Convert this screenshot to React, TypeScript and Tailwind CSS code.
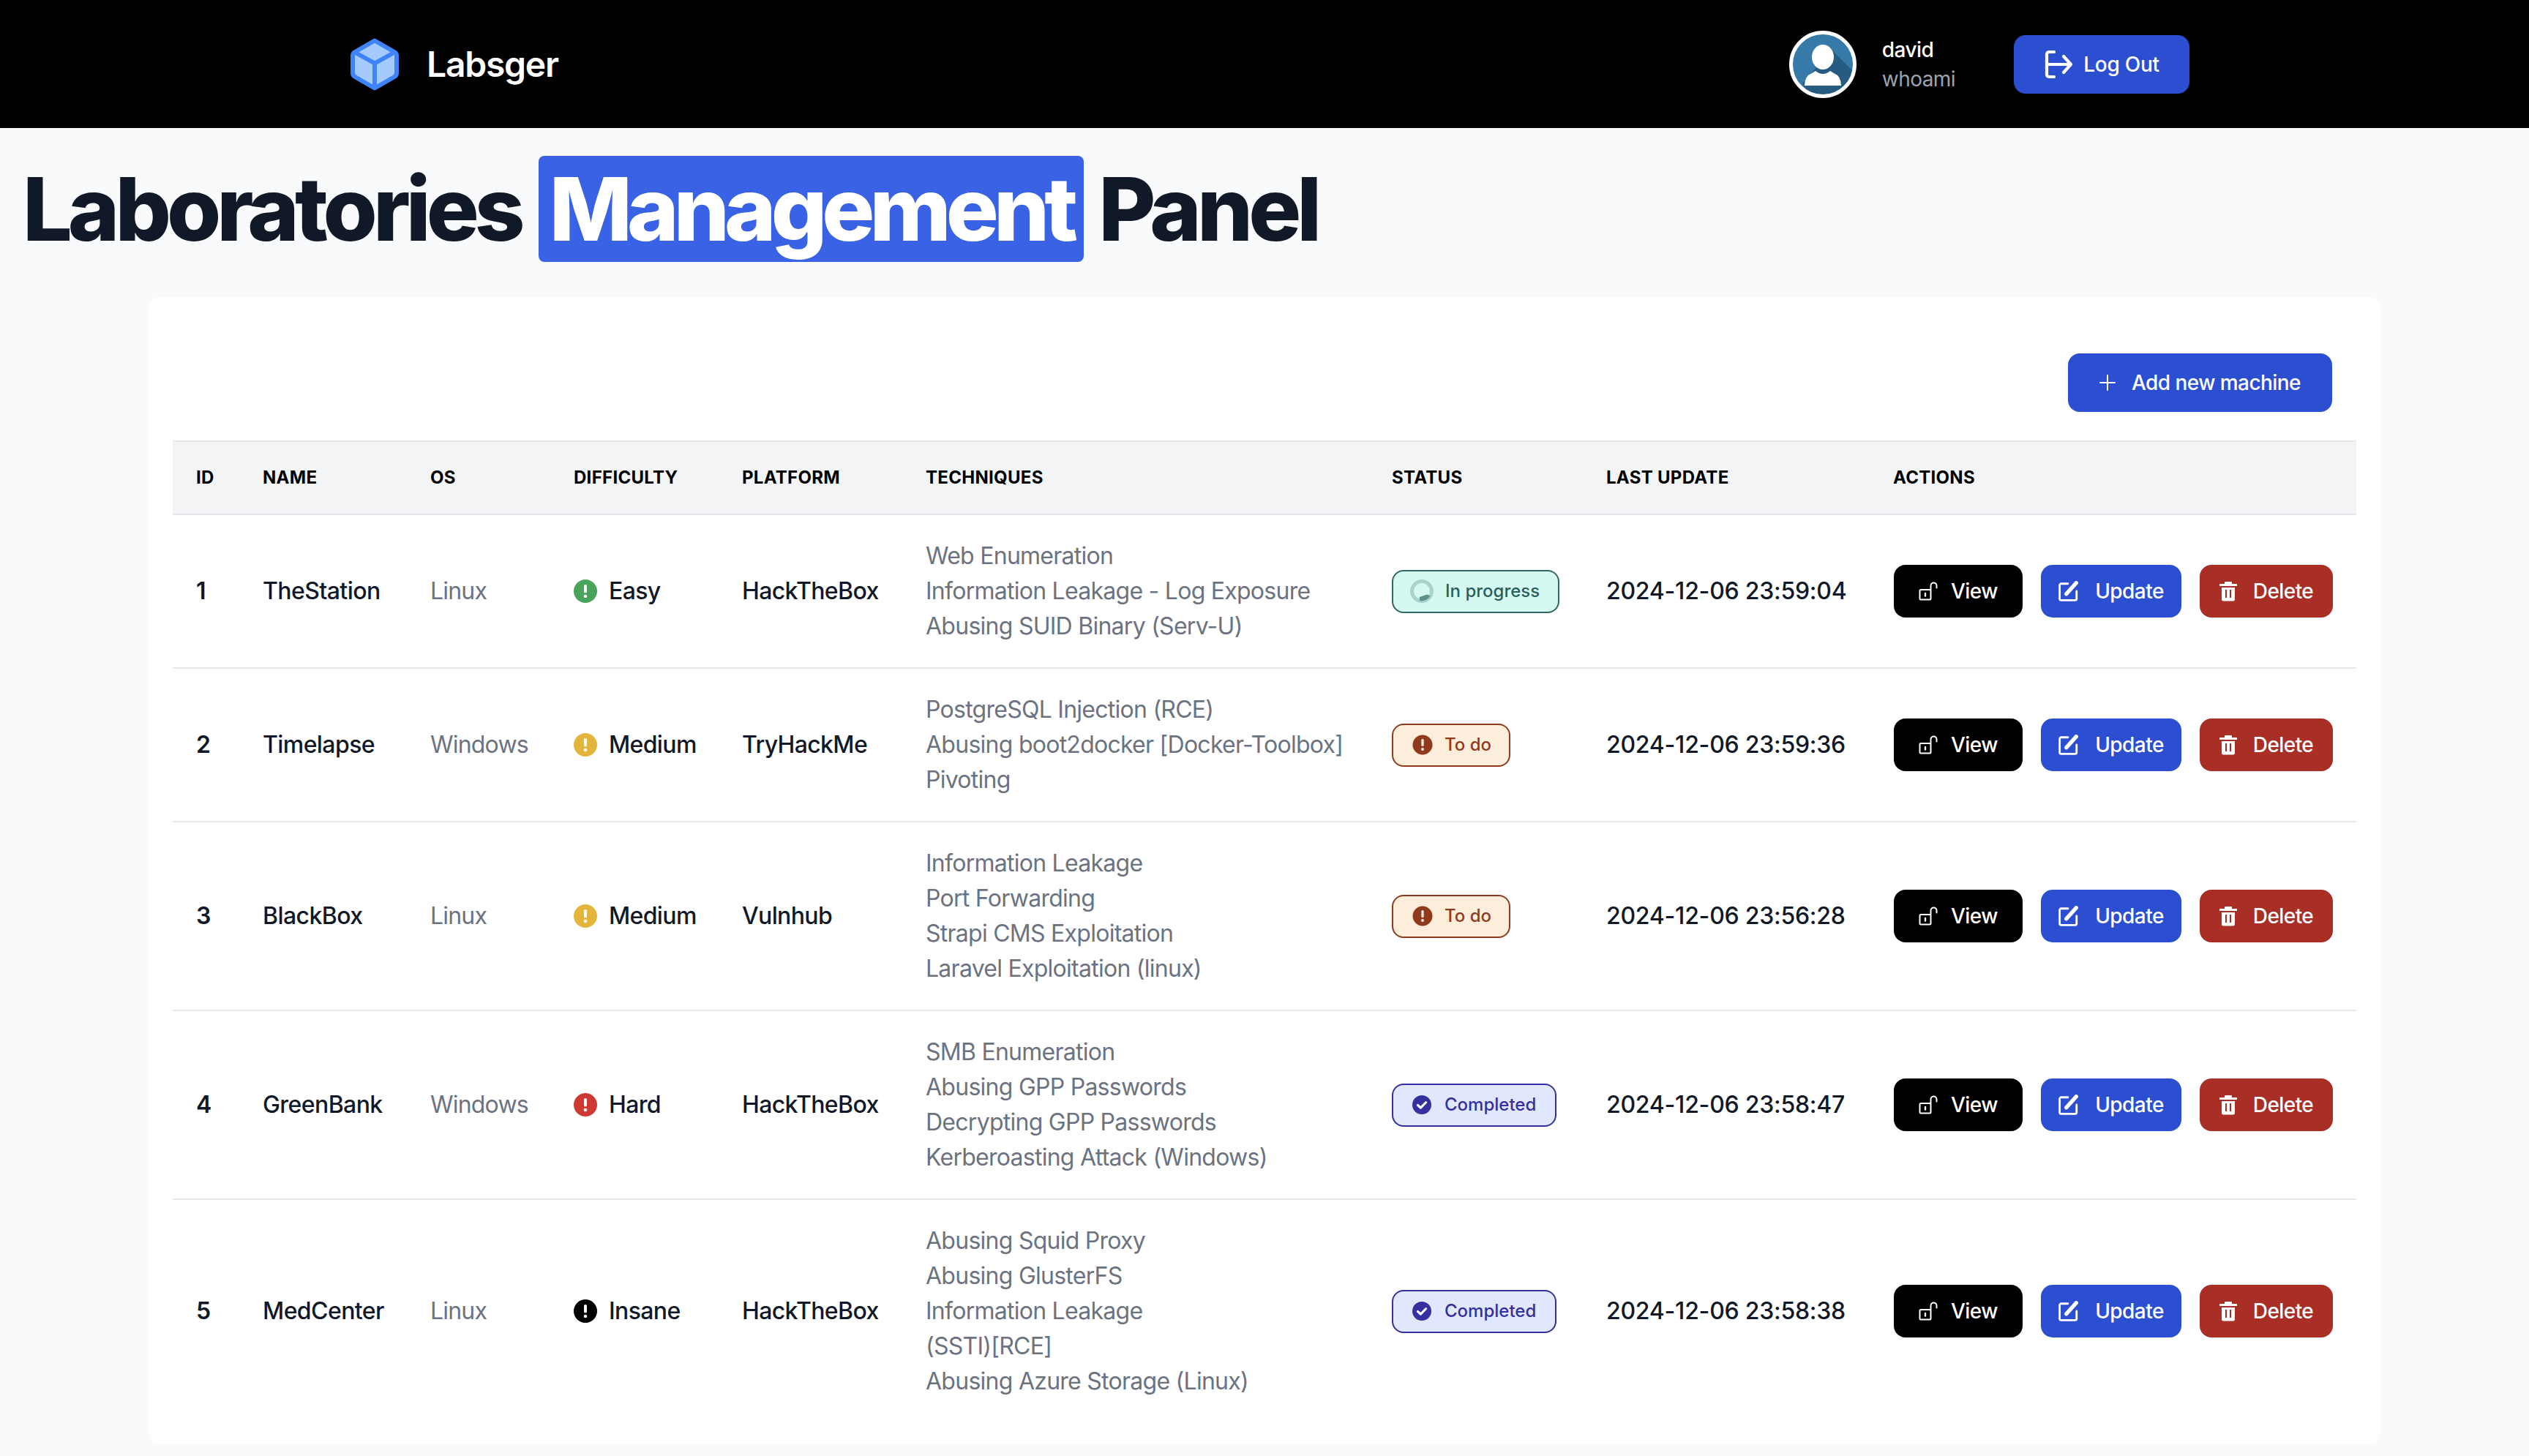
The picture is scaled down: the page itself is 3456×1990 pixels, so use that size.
import React from 'react';

type Status = 'progress' | 'todo' | 'done';

interface Machine {
  id: number;
  name: string;
  os: string;
  difficulty: string;
  platform: string;
  techniques: string[];
  status: Status;
  updated: string;
}

const machines: Machine[] = [
  {
    id: 1,
    name: 'TheStation',
    os: 'Linux',
    difficulty: 'Easy',
    platform: 'HackTheBox',
    techniques: ['Web Enumeration', 'Information Leakage - Log Exposure', 'Abusing SUID Binary (Serv-U)'],
    status: 'progress',
    updated: '2024-12-06 23:59:04',
  },
  {
    id: 2,
    name: 'Timelapse',
    os: 'Windows',
    difficulty: 'Medium',
    platform: 'TryHackMe',
    techniques: ['PostgreSQL Injection (RCE)', 'Abusing boot2docker [Docker-Toolbox]', 'Pivoting'],
    status: 'todo',
    updated: '2024-12-06 23:59:36',
  },
  {
    id: 3,
    name: 'BlackBox',
    os: 'Linux',
    difficulty: 'Medium',
    platform: 'Vulnhub',
    techniques: ['Information Leakage', 'Port Forwarding', 'Strapi CMS Exploitation', 'Laravel Exploitation (linux)'],
    status: 'todo',
    updated: '2024-12-06 23:56:28',
  },
  {
    id: 4,
    name: 'GreenBank',
    os: 'Windows',
    difficulty: 'Hard',
    platform: 'HackTheBox',
    techniques: ['SMB Enumeration', 'Abusing GPP Passwords', 'Decrypting GPP Passwords', 'Kerberoasting Attack (Windows)'],
    status: 'done',
    updated: '2024-12-06 23:58:47',
  },
  {
    id: 5,
    name: 'MedCenter',
    os: 'Linux',
    difficulty: 'Insane',
    platform: 'HackTheBox',
    techniques: ['Abusing Squid Proxy', 'Abusing GlusterFS', 'Information Leakage', '(SSTI)[RCE]', 'Abusing Azure Storage (Linux)'],
    status: 'done',
    updated: '2024-12-06 23:58:38',
  },
];

const difficultyColor: Record<string, string> = {
  Easy: 'text-[#4aa35a]',
  Medium: 'text-[#e3b53d]',
  Hard: 'text-[#cc3a32]',
  Insane: 'text-black',
};

function CubeLogo() {
  return (
    <svg viewBox="0 0 66 72" className="h-[72px] w-[66px]">
      <path
        d="M33 3.5 L60 19 Q63 21 63 24 L63 48 Q63 51 60 53 L33 68.5 L6 53 Q3 51 3 48 L3 24 Q3 21 6 19 Z"
        fill="#a4cafe"
        stroke="#3f83f8"
        strokeWidth="6"
        strokeLinejoin="round"
      />
      <path d="M5 19 L33 34.5 L61 19 M33 34.5 L33 68" fill="none" stroke="#3f83f8" strokeWidth="6" />
    </svg>
  );
}

function Avatar() {
  return (
    <svg viewBox="0 0 92 92" className="h-[92px] w-[92px]">
      <clipPath id="avatar-clip">
        <circle cx="46" cy="46" r="43" />
      </clipPath>
      <circle cx="46" cy="46" r="43" fill="#367aaa" />
      <g clipPath="url(#avatar-clip)">
        <path d="M58 26 L92 60 L92 92 L30 92 L18 72 Z" fill="#275c82" />
        <ellipse cx="46" cy="36" rx="15" ry="17" fill="#fff" />
        <path d="M21 75 Q21 62 31 58 L36 55 Q46 63 56 55 L61 58 Q71 62 71 75 Z" fill="#fff" />
      </g>
      <circle cx="46" cy="46" r="43.5" fill="none" stroke="#fff" strokeWidth="5" />
    </svg>
  );
}

function LogoutIcon() {
  return (
    <svg viewBox="0 0 40 40" fill="none" stroke="currentColor" strokeWidth="4.2" strokeLinecap="round" strokeLinejoin="round" className="h-10 w-10">
      <path d="M14 3H7a3 3 0 0 0-3 3v28a3 3 0 0 0 3 3h7" />
      <path d="M6 20h31M27 9l10 11-10 11" />
    </svg>
  );
}

function PlusIcon() {
  return (
    <svg viewBox="0 0 22 22" fill="none" stroke="currentColor" strokeWidth="2" strokeLinecap="round" className="h-[22px] w-[22px]">
      <path d="M11 1v20M1 11h20" />
    </svg>
  );
}

function LockOpenIcon() {
  return (
    <svg viewBox="0 0 26 26" fill="none" stroke="currentColor" strokeWidth="2" strokeLinecap="round" strokeLinejoin="round" className="h-[26px] w-[26px]">
      <rect x="1.5" y="11" width="15" height="13.5" rx="1.5" />
      <path d="M9 16v3.5" strokeWidth="2.4" />
      <path d="M16.5 11V5.5a4 4 0 0 1 8 0v3" />
    </svg>
  );
}

function EditIcon() {
  return (
    <svg viewBox="0 0 26 26" fill="none" stroke="currentColor" className="h-7 w-7" strokeLinecap="round" strokeLinejoin="round">
      <path d="M12 3.5H3.5a2 2 0 0 0-2 2v17a2 2 0 0 0 2 2H21a2 2 0 0 0 2-2V13" strokeWidth="2.6" />
      <path d="M10 16.5 L22.5 2.5" strokeWidth="5" />
    </svg>
  );
}

function TrashIcon() {
  return (
    <svg viewBox="0 0 24 28" className="h-7 w-6" fill="currentColor">
      <path d="M8 1h8a1 1 0 0 1 1 1v2h6a1 1 0 0 1 0 3H1a1 1 0 0 1 0-3h6V2a1 1 0 0 1 1-1z" />
      <path
        fillRule="evenodd"
        d="M3 9h18v16a2.5 2.5 0 0 1-2.500 2.500h-13A2.500 2.500 0 0 1 3 25zM8 12v11h2V12zM14 12v11h2V12z"
      />
    </svg>
  );
}

function AlertDot({ className }: { className: string }) {
  return (
    <svg viewBox="0 0 32 32" className={className}>
      <circle cx="16" cy="16" r="16" fill="currentColor" />
      <rect x="14" y="7" width="4" height="11.500" rx="2" fill="#fff" />
      <circle cx="16" cy="23" r="2.300" fill="#fff" />
    </svg>
  );
}

function StatusBadge({ status }: { status: Status }) {
  if (status === 'progress') {
    return (
      <span className="flex h-[59px] w-[229px] items-center gap-4 rounded-2xl border-2 border-[#2f6663] bg-[#d5f9f1] pl-[23px] text-2xl font-medium text-[#2c5f5c]">
        <svg viewBox="0 0 32 32" className="h-8 w-8 shrink-0">
          <circle cx="16" cy="16" r="13.500" fill="none" stroke="#a9d2cc" strokeWidth="5" />
          <path d="M13 29 L13 24 L23 20.500 L27.500 22.500 A13.500 13.500 0 0 1 13 29z" fill="#5f918b" />
        </svg>
        In progress
      </span>
    );
  }
  if (status === 'todo') {
    return (
      <span className="flex h-[59px] w-[162px] items-center gap-4 rounded-2xl border-2 border-[#8f3a1c] bg-[#fdeddb] pl-[26px] text-2xl font-medium text-[#8f3a1c]">
        <svg viewBox="0 0 28 28" className="h-7 w-7 shrink-0">
          <circle cx="14" cy="14" r="13.500" fill="#8f3a1c" />
          <rect x="12.300" y="6" width="3.400" height="10" rx="1.500" fill="#fdeddb" />
          <circle cx="14" cy="20" r="2" fill="#fdeddb" />
        </svg>
        To do
      </span>
    );
  }
  return (
    <span className="flex h-[59px] w-[225px] items-center gap-[18px] rounded-2xl border-2 border-[#352fa0] bg-[#e1e7fc] pl-[26px] text-2xl font-medium text-[#352fa0]">
      <svg viewBox="0 0 28 28" className="h-[26px] w-[26px] shrink-0">
        <circle cx="14" cy="14" r="14" fill="#352fa0" />
        <path d="M8 14.500l4.200 4L20 10.500" fill="none" stroke="#fff" strokeWidth="3.400" strokeLinecap="round" strokeLinejoin="round" />
      </svg>
      Completed
    </span>
  );
}

const headers = ['ID', 'Name', 'OS', 'Difficulty', 'Platform', 'Techniques', 'Status', 'Last update', 'Actions'];

export default function App() {
  return (
    <div className="min-h-[1990px] bg-[#f9fafb] font-[family-name:Inter,sans-serif] text-[#111827]">
      {/* Top bar */}
      <header className="flex h-[175px] items-center justify-between bg-black pl-[479px] pr-[464px]">
        <div className="flex items-center gap-[38px]">
          <CubeLogo />
          <span className="text-5xl font-semibold tracking-[-0.026em] text-white">Labsger</span>
        </div>
        <div className="flex items-center">
          <Avatar />
          <div className="ml-[35px] mr-[80px] flex flex-col text-[28px] leading-10 tracking-[-0.02em]">
            <span className="font-medium text-white">david</span>
            <span className="text-[#9ca3af]">whoami</span>
          </div>
          <button className="flex h-20 w-[240px] items-center justify-center gap-[14px] rounded-2xl bg-[#2c4fd1] text-[28px] font-medium tracking-[-0.01em] text-white">
            <LogoutIcon />
            Log Out
          </button>
        </div>
      </header>

      <h1 className="mb-[60px] whitespace-nowrap pl-[31px] pt-[51px] text-[120px] font-extrabold leading-[120px] tracking-[-0.05em]">
        Laboratories{' '}
        <span className="ml-1 rounded-lg bg-[#3963e4] px-[15px] tracking-[-0.058em] text-white">Management</span> Panel
      </h1>

      {/* Machines card */}
      <main className="mx-[203px] rounded-2xl bg-white px-[33px] pb-[30px] pt-[77px]">
        <div className="mb-[39px] flex justify-end pr-[33px]">
          <button className="flex h-20 w-[361px] items-center justify-center gap-[22px] rounded-2xl bg-[#2c4fd1] text-[28px] font-medium tracking-[-0.02em] text-white">
            <PlusIcon />
            Add new machine
          </button>
        </div>

        <table className="w-full table-fixed border-collapse text-left text-[32px] leading-[48px]">
          <colgroup>
            <col className="w-[91px]" />
            <col className="w-[229px]" />
            <col className="w-[196px]" />
            <col className="w-[230px]" />
            <col className="w-[251px]" />
            <col className="w-[637px]" />
            <col className="w-[293px]" />
            <col className="w-[392px]" />
            <col />
          </colgroup>
          <thead className="bg-[#f3f4f6]">
            <tr className="h-[100px] border-y-2 border-[#e5e7eb] text-2xl font-bold uppercase tracking-[0.012em] text-black">
              {headers.map(h => (
                <th key={h} className="pl-8 font-bold">
                  {h}
                </th>
              ))}
            </tr>
          </thead>
          <tbody>
            {machines.map((m, index) => (
              <tr key={m.id} className={index < machines.length - 1 ? 'border-b-2 border-[#e5e7eb]' : ''}>
                <td className="py-8 pl-8 font-semibold">{m.id}</td>
                <td className="py-8 pl-8 font-medium tracking-[-0.018em]">{m.name}</td>
                <td className="py-8 pl-8 tracking-[-0.025em] text-[#6b7280]">{m.os}</td>
                <td className="py-8 pl-8 font-medium tracking-[-0.02em]">
                  <span className="flex items-center gap-4">
                    <AlertDot className={`h-8 w-8 shrink-0 ${difficultyColor[m.difficulty]}`} />
                    {m.difficulty}
                  </span>
                </td>
                <td className="py-8 pl-8 font-medium tracking-[-0.02em]">{m.platform}</td>
                <td className="py-8 pl-8 tracking-[-0.023em] text-[#6b7280]">
                  {m.techniques.map(t => (
                    <div key={t}>{t}</div>
                  ))}
                </td>
                <td className="py-8 pl-8">
                  <StatusBadge status={m.status} />
                </td>
                <td className="py-8 pl-8 font-medium tracking-[-0.008em]">{m.updated}</td>
                <td className="py-8 pl-[33px]">
                  <div className="flex items-center gap-[25px] text-[28px] font-medium tracking-[-0.02em] text-white">
                    <button className="flex h-[72px] w-[176px] items-center justify-center gap-[18px] rounded-2xl bg-black">
                      <LockOpenIcon />
                      View
                    </button>
                    <button className="flex h-[72px] w-[192px] items-center justify-center gap-[22px] rounded-2xl bg-[#2c4fd1]">
                      <EditIcon />
                      Update
                    </button>
                    <button className="flex h-[72px] w-[182px] items-center justify-center gap-[22px] rounded-2xl bg-[#a82e26]">
                      <TrashIcon />
                      Delete
                    </button>
                  </div>
                </td>
              </tr>
            ))}
          </tbody>
        </table>
      </main>
    </div>
  );
}
